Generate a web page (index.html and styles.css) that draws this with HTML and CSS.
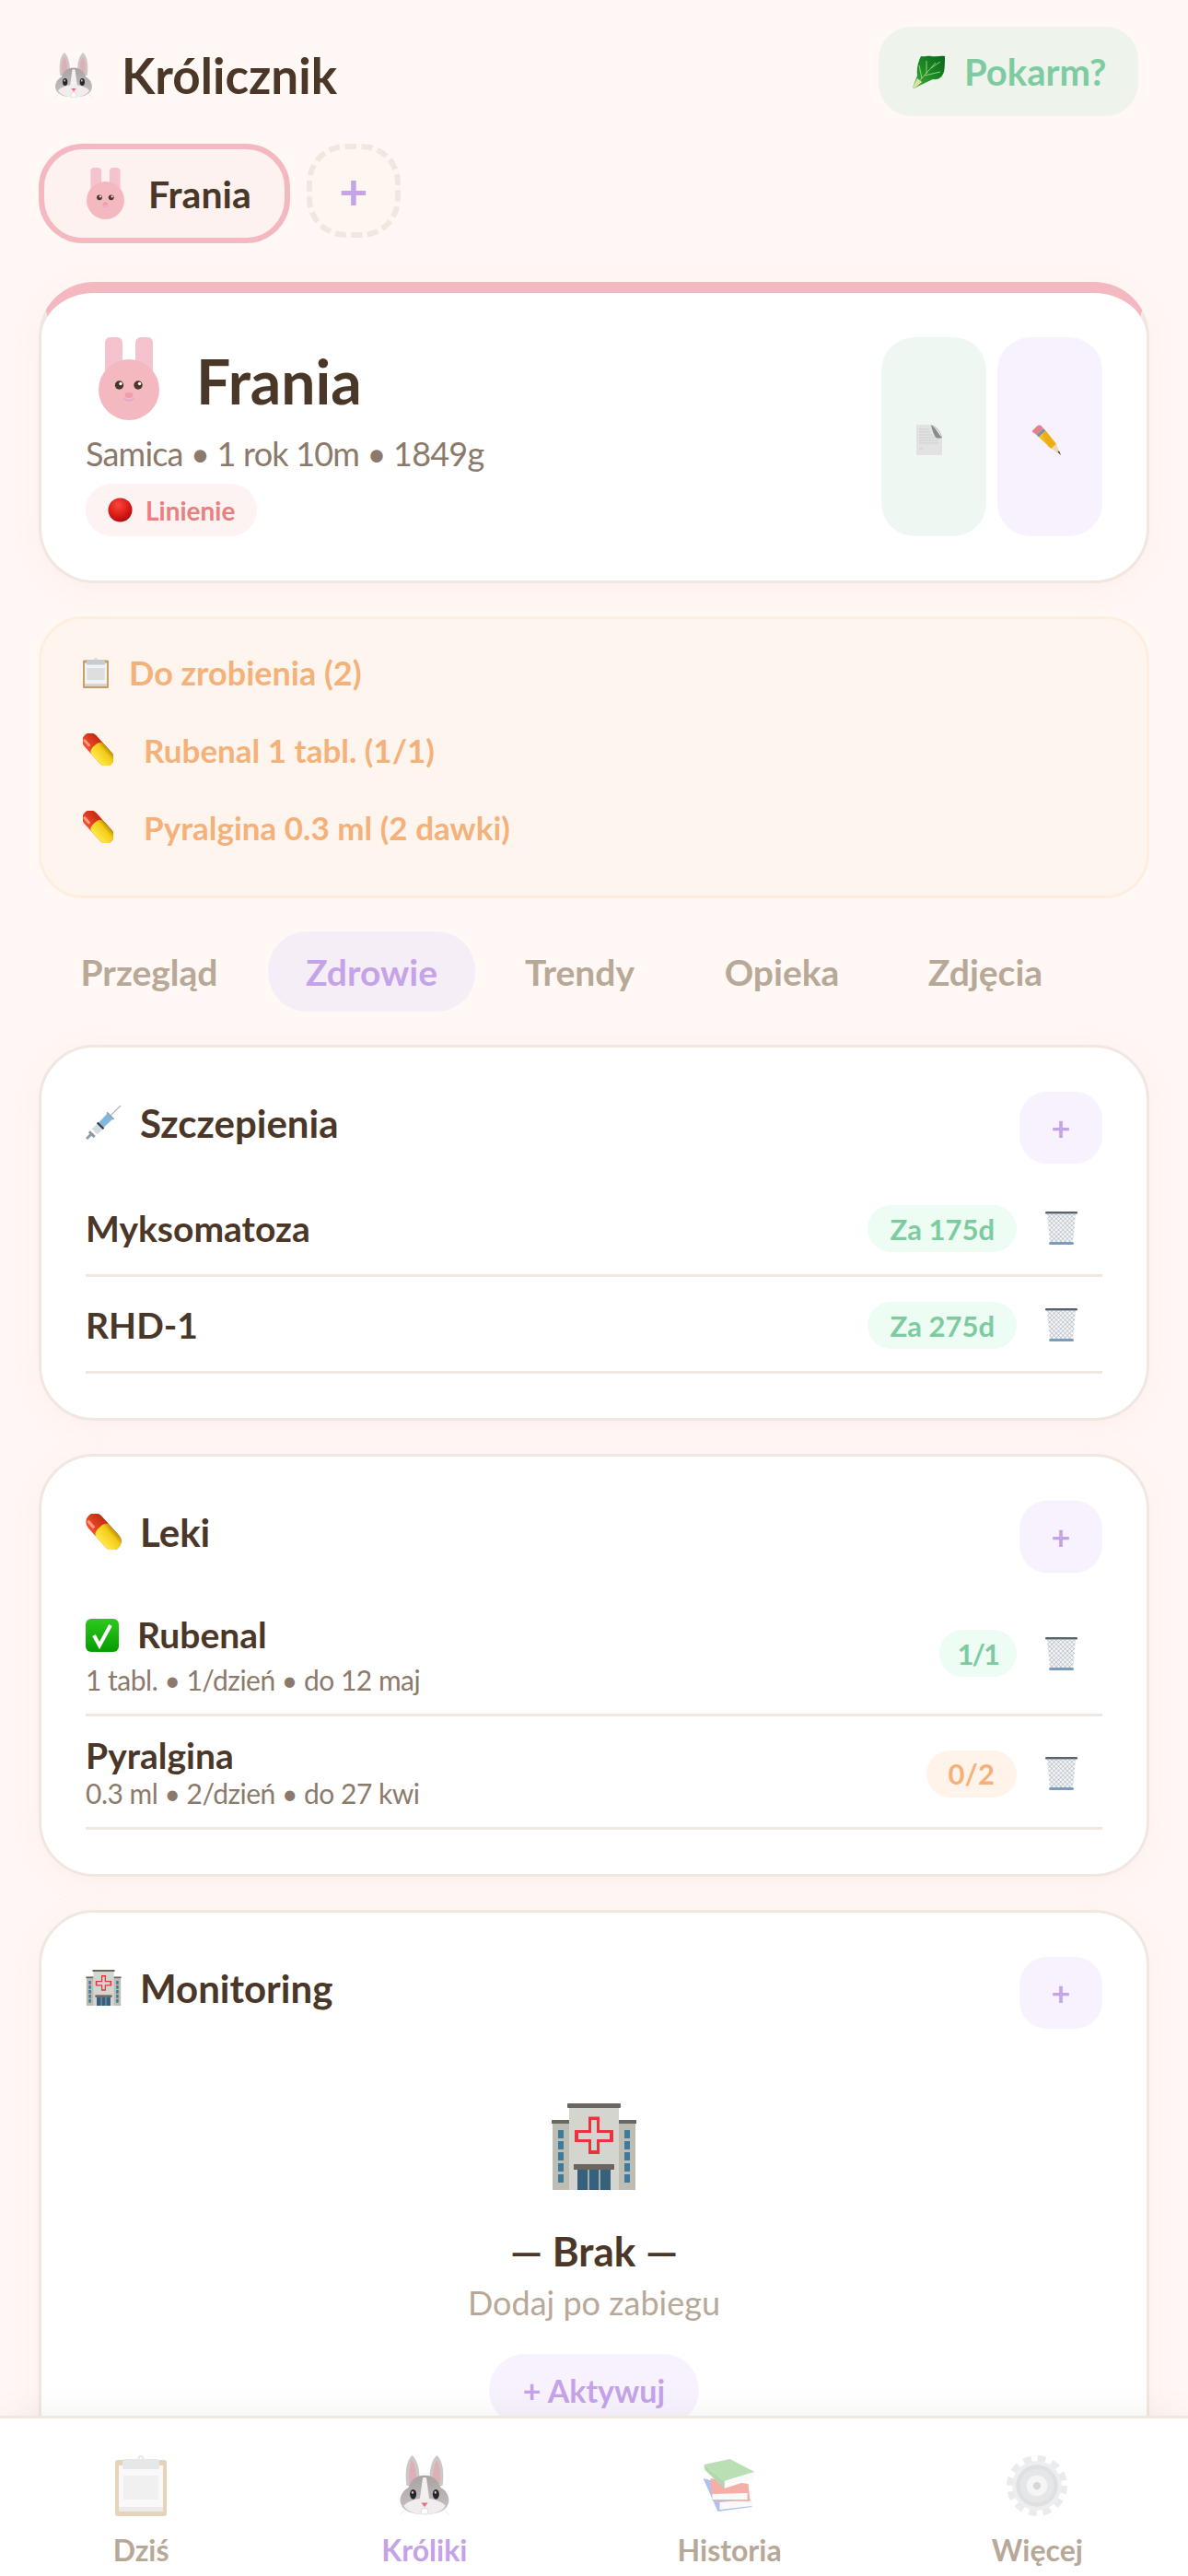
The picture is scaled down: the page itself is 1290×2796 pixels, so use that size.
FILE: index.html
```html
<!DOCTYPE html>
<html lang="pl">
<head>
    <meta charset="UTF-8">
    <title>Królicznik</title>
    <link rel="stylesheet" href="styles.css">
</head>
<body>
    <svg class="sprite" aria-hidden="true">
        <defs>
            <linearGradient id="headGrad" x1="0" y1="0" x2="0" y2="1">
                <stop offset="0" stop-color="#a9a2a2"/><stop offset="1" stop-color="#c9c3c3"/>
            </linearGradient>
            <radialGradient id="redBall" cx=".42" cy=".3" r=".75">
                <stop offset="0" stop-color="#f8483a"/><stop offset=".6" stop-color="#d91a17"/><stop offset="1" stop-color="#a90a0a"/>
            </radialGradient>
            <linearGradient id="leafGrad" x1="0" y1="1" x2="1" y2="0">
                <stop offset="0" stop-color="#4fae3c"/><stop offset=".5" stop-color="#1a8a26"/><stop offset="1" stop-color="#0b6518"/>
            </linearGradient>
            <linearGradient id="pillRed" x1="0" y1="0" x2="1" y2="0">
                <stop offset="0" stop-color="#f4502c"/><stop offset="1" stop-color="#c62a12"/>
            </linearGradient>
            <linearGradient id="pillYellow" x1="0" y1="0" x2="1" y2="0">
                <stop offset="0" stop-color="#ffe94a"/><stop offset=".7" stop-color="#f4cb16"/><stop offset="1" stop-color="#b98f0a"/>
            </linearGradient>
            <linearGradient id="checkGrad" x1="0" y1="0" x2="0" y2="1">
                <stop offset="0" stop-color="#2fc81d"/><stop offset="1" stop-color="#069c02"/>
            </linearGradient>
            <pattern id="mesh" width="3.4" height="3.4" patternUnits="userSpaceOnUse" patternTransform="rotate(45)">
                <path d="M0 0H3.4M0 0V3.4" stroke="#76828e" stroke-width=".6" fill="none"/>
            </pattern>
        </defs>

        <symbol id="rabbit" viewBox="0 0 54 64">
            <path d="M14 0C8 5 6 18 8 32H21C23 18 20 5 14 0Z" fill="#cdc7c6"/>
            <path d="M14 5C11 9 10 20 11 30H18C19 20 17 9 14 5Z" fill="#dcb0b6"/>
            <path d="M40 0C34 5 31 18 33 32H46C48 18 46 5 40 0Z" fill="#cdc7c6"/>
            <path d="M40 5C37 9 35 20 36 30H43C44 20 43 9 40 5Z" fill="#dcb0b6"/>
            <path d="M27 21C36 21 42 27 44 34C51 38 54 45 52 51C49 60 38 62 27 62C16 62 5 60 2 51C0 45 3 38 10 34C12 27 18 21 27 21Z" fill="url(#headGrad)"/>
            <path d="M25 24C25.5 23 28.5 23 29 24L32 46H22Z" fill="#f3f0f0"/>
            <path d="M5 53C11 47 21 45 27 45C33 45 43 47 49 53C45 60 36 62 27 62C18 62 9 60 5 53Z" fill="#f1eded"/>
            <ellipse cx="15" cy="41" rx="3.4" ry="5.2" fill="#26252a"/>
            <ellipse cx="39" cy="41" rx="3.4" ry="5.2" fill="#26252a"/>
            <ellipse cx="14.4" cy="39" rx="1" ry="1.5" fill="#cfcfcf"/>
            <ellipse cx="38.4" cy="39" rx="1" ry="1.5" fill="#cfcfcf"/>
            <path d="M23.5 50H30.5L27 54.5Z" fill="#e0728a"/>
            <rect x="23.5" y="56" width="7" height="6" rx="1.5" fill="#fff" stroke="#cfcaca" stroke-width=".6"/>
            <path d="M6 58L1 62M48 58L53 62" stroke="#ddd" stroke-width=".6"/>
        </symbol>

        <symbol id="bunny" viewBox="0 0 66 90">
            <path d="M7 40V6C7 2 10 0 13 0H20C24 0 26 3 26 7V40Z" fill="#f5c3cd"/>
            <path d="M40 40V7C40 3 42 0 46 0H53C56 0 59 2 59 6V40Z" fill="#f5c3cd"/>
            <circle cx="33" cy="57" r="33" fill="#f4b8c1"/>
            <circle cx="22.5" cy="52" r="4.7" fill="#4a3728"/>
            <circle cx="43" cy="52" r="4.7" fill="#4a3728"/>
            <circle cx="24" cy="50.5" r="1.7" fill="#fff"/>
            <circle cx="44.5" cy="50.5" r="1.7" fill="#fff"/>
            <ellipse cx="33" cy="63" rx="4.5" ry="3" fill="#f29cac"/>
            <path d="M28 66.5C30 69.5 36 69.5 38 66.5" stroke="#d9a3d6" stroke-width="1.3" fill="none" stroke-linecap="round"/>
        </symbol>

        <symbol id="lettuce" viewBox="0 0 36 36">
            <path d="M1 35L6 22C5 14 7 7 10 1C14 2 18 0 21 1C26 2 31 0 36 1C36 7 36 13 35 18C33 24 29 27 23 26C17 29 9 32 3 36Z" fill="url(#leafGrad)"/>
            <path d="M2 35L26 8M11 25L8 11M16 20L16 6M21 14L31 7M14 22L31 18" stroke="#b9e08e" stroke-width=".8" fill="none"/>
            <path d="M1 35L6 25L11 29L3 36Z" fill="#d6e3a4"/>
        </symbol>

        <symbol id="redcircle" viewBox="0 0 28 28">
            <circle cx="14" cy="14" r="13.5" fill="url(#redBall)"/>
        </symbol>

        <symbol id="page" viewBox="0 0 28 33">
            <path d="M0 0H16L28 14V33H0Z" fill="#e2e2e2"/>
            <path d="M3 5H14M3 8H15M3 11H17M3 14H20M3 17H24M3 20H24M3 26H8" stroke="#cfcfcf" stroke-width="1"/>
            <path d="M16 0C17 6 19 10 21 14C24 15 26 15 28 14C27 8 22 2 16 0Z" fill="#8c8c8c"/>
            <path d="M16 0C22 3 26 8 28 14C24 10 22 4 16 0Z" fill="#efefef"/>
        </symbol>

        <symbol id="pencil" viewBox="0 0 32 33">
            <path d="M1.5 6L6 1.5C7.5 0 10 0 11 1.5L13 4L5.5 11L2 8.5C.5 8 .5 7 1.5 6Z" fill="#e8808a"/>
            <path d="M13 4L5.5 11L8 13.5L15.5 6.5Z" fill="#7d8fa3"/>
            <path d="M15.5 6.5L8 13.5L21.5 26L27 21Z" fill="#f6bb1a"/>
            <path d="M12 10L18 23.5L21.5 26L27 21L15.5 6.5Z" fill="#e39d10" opacity=".45"/>
            <path d="M21.5 26L27 21L32 33Z" fill="#ead7b5"/>
            <path d="M28.5 29.5L30 28.5L32 33Z" fill="#2f2f33"/>
        </symbol>

        <symbol id="clipboard" viewBox="0 0 56 66">
            <rect x="0" y="5" width="56" height="61" rx="3" fill="#c89f68"/>
            <rect x="4" y="11" width="48" height="50" fill="#f2f2f2"/>
            <rect x="4" y="56" width="48" height="5" fill="#d9d5cf"/>
            <rect x="9" y="22" width="38" height="26" fill="#dedede"/>
            <rect x="8" y="4" width="40" height="11" rx="2" fill="#c6cbd0"/>
            <circle cx="28" cy="3.5" r="2.5" fill="none" stroke="#c6cbd0" stroke-width="2"/>
        </symbol>

        <symbol id="pill" viewBox="0 0 34 36">
            <g transform="rotate(-42 17 18)">
                <rect x="8" y="-4" width="18" height="44" rx="9" fill="url(#pillRed)"/>
                <path d="M8 18C8 13 12 12 17 12C22 12 26 13 26 18V31C26 36 22 40 17 40C12 40 8 36 8 31Z" fill="url(#pillYellow)"/>
                <rect x="11" y="-1" width="3" height="10" rx="1.5" fill="#ff9c80"/>
            </g>
        </symbol>

        <symbol id="syringe" viewBox="0 0 40 40">
            <path d="M27 13L39 1" stroke="#aab4bc" stroke-width="1.2"/>
            <path d="M4 30L10 36M1 38L7 32" stroke="#8f99a2" stroke-width="3"/>
            <path d="M7 27L13 33L31 15L25 9Z" fill="#d3dce2"/>
            <path d="M14 21L19 26L31 15L25 9Z" fill="#7fb8dd"/>
            <path d="M13 20L20 27" stroke="#34383c" stroke-width="2.2"/>
            <path d="M23.5 8.5L31.5 16.5" stroke="#98a3ab" stroke-width="1.8"/>
        </symbol>

        <symbol id="check" viewBox="0 0 36 36">
            <rect width="36" height="36" rx="6" fill="url(#checkGrad)"/>
            <path d="M9 18L15 29L27 7" stroke="#fff" stroke-width="4" fill="none"/>
        </symbol>

        <symbol id="trash" viewBox="0 0 35 36">
            <path d="M2 3H33L30 34H5Z" fill="#f3f5f7"/>
            <path d="M2 3H33L30 34H5Z" fill="url(#mesh)"/>
            <rect x="0" y="0" width="35" height="2.5" rx="1.2" fill="#59636d"/>
            <rect x="4" y="33" width="27" height="3" rx="1.5" fill="#7c9cbc"/>
        </symbol>

        <symbol id="hospital" viewBox="0 0 92 94">
            <rect x="1" y="19" width="20" height="75" fill="#bdbdb4"/>
            <rect x="71" y="19" width="20" height="75" fill="#bdbdb4"/>
            <rect x="0" y="18" width="20" height="4" fill="#6b665f"/>
            <rect x="72" y="18" width="20" height="4" fill="#6b665f"/>
            <rect x="19" y="3" width="54" height="91" fill="#d5d5cf"/>
            <rect x="17" y="0" width="58" height="5" rx="1" fill="#6b665f"/>
            <path d="M40 14.5H52V29H67V42H52V55H40V42H25V29H40Z" fill="#e8343f"/>
            <path d="M43 18H49V32H63V39H49V51H43V39H29V32H43Z" fill="#d5d5cf"/>
            <g fill="#3f7a99">
                <rect x="7" y="29" width="6" height="9"/><rect x="7" y="41" width="6" height="9"/><rect x="7" y="53" width="6" height="9"/><rect x="7" y="65" width="6" height="9"/><rect x="7" y="77" width="6" height="9"/>
                <rect x="79" y="29" width="6" height="9"/><rect x="79" y="41" width="6" height="9"/><rect x="79" y="53" width="6" height="9"/><rect x="79" y="65" width="6" height="9"/><rect x="79" y="77" width="6" height="9"/>
            </g>
            <rect x="24" y="66" width="44" height="6" fill="#6b665f"/>
            <rect x="28" y="72" width="36" height="22" fill="#36607c"/>
            <path d="M40 72V94M52 72V94" stroke="#c8c8c0" stroke-width="1.5"/>
        </symbol>

        <symbol id="books" viewBox="-4 -3 65 66">
            <path d="M0 22L16 58L53 53L52 45L30 30Z" fill="#5379d1"/>
            <path d="M18 48L52 45L53 52L18 56Z" fill="#f6f6f6"/>
            <path d="M8 22L49 28L51 47L10 46Z" fill="#e74f3b"/>
            <path d="M10 39L48 38V45L10 45Z" fill="#f6f6f6"/>
            <path d="M1 7L29 1L56 15L23 25Z" fill="#6bb95d"/>
            <path d="M23 25L56 15L54 23L23 33Z" fill="#f6f6f6"/>
            <path d="M1 7L23 25V33L2 13Z" fill="#5aa84d"/>
        </symbol>

        <symbol id="gear" viewBox="0 0 64 64">
            <circle cx="32" cy="32" r="26" fill="none" stroke="#d0d3d9" stroke-width="12" stroke-dasharray="7.5 6.11"/>
            <circle cx="32" cy="32" r="26" fill="#d8dade"/>
            <circle cx="32" cy="32" r="22" fill="#b9bbc1"/>
            <circle cx="32" cy="32" r="18" fill="#c6c8cd"/>
            <circle cx="32" cy="32" r="11" fill="#eaeaec"/>
            <circle cx="32" cy="32" r="4" fill="#a5a7ad"/>
        </symbol>
    </svg>

    <div class="app">
        <main class="content">
            <header class="topbar">
                <div class="brand">
                    <svg class="ico ico-brand"><use href="#rabbit"/></svg>
                    <h1>Królicznik</h1>
                </div>
                <button class="food-btn"><svg class="ico ico-leaf"><use href="#lettuce"/></svg>Pokarm?</button>
            </header>

            <div class="pets">
                <div class="pet-chip"><svg class="ico ico-chip"><use href="#bunny"/></svg>Frania</div>
                <div class="pet-add">+</div>
            </div>

            <section class="card profile">
                <div class="profile-info">
                    <div class="profile-name">
                        <svg class="ico ico-bunny"><use href="#bunny"/></svg>
                        <h2>Frania</h2>
                    </div>
                    <p class="meta">Samica • 1 rok 10m • 1849g</p>
                    <span class="tag"><svg class="ico ico-dot"><use href="#redcircle"/></svg>Linienie</span>
                </div>
                <div class="profile-actions">
                    <button class="act act-green"><svg class="ico ico-act"><use href="#page"/></svg></button>
                    <button class="act act-lilac"><svg class="ico ico-act-p"><use href="#pencil"/></svg></button>
                </div>
            </section>

            <section class="todo">
                <div class="todo-title"><svg class="ico ico-todo"><use href="#clipboard"/></svg>Do zrobienia (2)</div>
                <div class="todo-row"><svg class="ico ico-pill"><use href="#pill"/></svg>Rubenal 1 tabl. (1/1)</div>
                <div class="todo-row"><svg class="ico ico-pill"><use href="#pill"/></svg>Pyralgina 0.3 ml (2 dawki)</div>
            </section>

            <nav class="tabs">
                <span class="tab">Przegląd</span>
                <span class="tab active">Zdrowie</span>
                <span class="tab">Trendy</span>
                <span class="tab">Opieka</span>
                <span class="tab">Zdjęcia</span>
            </nav>

            <section class="card block">
                <div class="block-head">
                    <h3><svg class="ico ico-head"><use href="#syringe"/></svg>Szczepienia</h3>
                    <button class="add-btn">+</button>
                </div>
                <div class="row">
                    <div class="row-name">Myksomatoza</div>
                    <span class="badge">Za 175d</span>
                    <svg class="ico ico-trash"><use href="#trash"/></svg>
                </div>
                <div class="row">
                    <div class="row-name">RHD-1</div>
                    <span class="badge">Za 275d</span>
                    <svg class="ico ico-trash"><use href="#trash"/></svg>
                </div>
            </section>

            <section class="card block">
                <div class="block-head">
                    <h3><svg class="ico ico-head"><use href="#pill"/></svg>Leki</h3>
                    <button class="add-btn">+</button>
                </div>
                <div class="row row-med">
                    <div class="row-text">
                        <div class="row-name tall"><svg class="ico ico-check"><use href="#check"/></svg>Rubenal</div>
                        <div class="row-sub">1 tabl. • 1/dzień • do 12 maj</div>
                    </div>
                    <span class="badge badge-count">1/1</span>
                    <svg class="ico ico-trash"><use href="#trash"/></svg>
                </div>
                <div class="row row-med">
                    <div class="row-text">
                        <div class="row-name">Pyralgina</div>
                        <div class="row-sub">0.3 ml • 2/dzień • do 27 kwi</div>
                    </div>
                    <span class="badge badge-orange">0/2</span>
                    <svg class="ico ico-trash"><use href="#trash"/></svg>
                </div>
            </section>

            <section class="card block">
                <div class="block-head">
                    <h3><svg class="ico ico-head"><use href="#hospital"/></svg>Monitoring</h3>
                    <button class="add-btn">+</button>
                </div>
                <div class="empty">
                    <svg class="ico ico-empty"><use href="#hospital"/></svg>
                    <div class="empty-title">— Brak —</div>
                    <div class="empty-sub">Dodaj po zabiegu</div>
                    <button class="empty-btn">+ Aktywuj</button>
                </div>
            </section>
        </main>

        <footer class="bottom-nav">
            <div class="nav-item"><svg class="ico ico-nav dim"><use href="#clipboard"/></svg>Dziś</div>
            <div class="nav-item active"><svg class="ico ico-nav"><use href="#rabbit"/></svg>Króliki</div>
            <div class="nav-item"><svg class="ico ico-nav dim"><use href="#books"/></svg>Historia</div>
            <div class="nav-item"><svg class="ico ico-nav dim"><use href="#gear"/></svg>Więcej</div>
        </footer>
    </div>
</body>
</html>
```

FILE: styles.css
```css
* { box-sizing: border-box; }
html, body { margin: 0; height: 100%; }
body { font-family: "Lato", "Noto Sans", sans-serif; color: #4a3728; background: #fff8f5; }
h1, h2, h3, p { margin: 0; }
button { font-family: inherit; border: none; cursor: pointer; padding: 0; }

.sprite { position: absolute; width: 0; height: 0; }
.ico { display: block; flex-shrink: 0; }

.app { height: 2796px; display: flex; flex-direction: column; overflow: hidden; }
.content { flex: 1; min-height: 0; overflow: hidden; padding: 29px 42px 0; }

.topbar { display: flex; justify-content: space-between; align-items: flex-start; height: 127px; }
.brand { display: flex; align-items: center; gap: 31px; padding: 27px 0 0 17px; }
.brand h1 { font-size: 53px; font-weight: 700; line-height: 52px; }
.ico-brand { width: 42px; height: 50px; }
.food-btn { display: flex; align-items: center; gap: 21px; width: 282px; height: 97px; margin-right: 12px; padding: 0 36px; border-radius: 36px; background: #eef3ec; color: #7ecba1; font-size: 40px; font-weight: 700; }
.ico-leaf { width: 36px; height: 36px; }

.pets { display: flex; gap: 18px; align-items: flex-start; height: 150px; }
.pet-chip { display: flex; align-items: center; gap: 26px; width: 273px; height: 108px; padding-left: 46px; border: 6px solid #f4b8c1; border-radius: 48px; background: #fdf2f0; font-size: 41px; font-weight: 700; }
.ico-chip { width: 41px; height: 56px; }
.pet-add { display: flex; align-items: center; justify-content: center; width: 102px; height: 102px; border: 6px dashed #f0e8e0; border-radius: 42px; background: #fdf6f1; color: #c4a3e8; font-size: 54px; font-weight: 700; }

.card { background: #fff; border: 3px solid #f0e8e0; border-radius: 60px; box-shadow: 0 6px 30px rgba(244, 184, 193, .16); }

.profile { display: flex; justify-content: space-between; height: 327px; padding: 48px; border-top: 12px solid #f4b8c1; }
.profile-name { display: flex; align-items: center; gap: 40px; margin-left: 14px; height: 90px; }
.profile-name h2 { font-size: 66px; font-weight: 700; padding-top: 4px; }
.ico-bunny { width: 66px; height: 90px; }
.meta { margin-top: 12px; font-size: 36px; letter-spacing: -.8px; line-height: 48px; color: #8b7a6b; }
.tag { display: inline-flex; align-items: center; gap: 14px; height: 57px; margin-top: 9px; padding: 0 24px; border-radius: 30px; background: #fdf3f3; color: #e88080; font-size: 28px; font-weight: 700; }
.ico-dot { width: 27px; height: 27px; }
.profile-actions { display: flex; gap: 12px; }
.act { display: flex; align-items: center; justify-content: center; width: 114px; height: 216px; padding-top: 6px; border-radius: 36px; }
.act-green { background: #eff7f2; }
.act-lilac { background: #f7f2fd; }
.ico-act { width: 28px; height: 33px; margin-right: 10px; }
.ico-act-p { width: 32px; height: 33px; margin-right: 8px; }

.todo { height: 306px; margin-top: 36px; padding: 40px 45px; border: 3px solid #fdeee0; border-radius: 48px; background: #fff5ef; color: #f4b27a; font-weight: 700; }
.todo-title { display: flex; align-items: center; gap: 22px; height: 36px; font-size: 36px; }
.ico-todo { width: 28px; height: 33px; }
.todo-row { display: flex; align-items: center; gap: 33px; height: 37px; margin-top: 47px; font-size: 35px; }
.ico-pill { width: 33px; height: 35px; }

.tabs { display: grid; grid-template-columns: 240px 225px 209px 212px 212px; gap: 9px; height: 87px; margin-top: 36px; }
.tab { display: flex; align-items: center; justify-content: center; border-radius: 42px; color: #b8a898; font-size: 39px; font-weight: 700; }
.tab.active { background: #f6eef6; color: #c4a3e8; }

.block { margin-top: 36px; padding: 48px; }
.block-head { display: flex; justify-content: space-between; align-items: center; height: 78px; margin-bottom: 18px; }
.block-head h3 { display: flex; align-items: center; gap: 20px; padding-bottom: 11px; font-size: 42px; font-weight: 700; }
.ico-head { width: 39px; height: 39px; }
.add-btn { width: 90px; height: 78px; border-radius: 30px; background: #f7f2fd; color: #c4a3e8; font-size: 36px; font-weight: 700; }

.row { display: flex; align-items: center; padding: 27px 0 24px; border-bottom: 3px solid #f0e8e0; }
.row-med { padding: 24px 0 14px; }
.row-name { flex: 1; font-size: 39px; font-weight: 700; line-height: 51px; }
.row-med .row-name { line-height: 36px; }
.row-med .row-name.tall { display: flex; align-items: center; gap: 20px; line-height: 51px; }
.row-text { flex: 1; }
.row-sub { font-size: 30px; letter-spacing: -.5px; line-height: 46px; color: #8b7a6b; }
.ico-check { width: 36px; height: 36px; }
.badge { display: flex; align-items: center; height: 51px; padding: 0 24px; border-radius: 26px; background: #edfdf3; color: #7ecba1; font-size: 31px; font-weight: 700; }
.badge-count { letter-spacing: -2px; padding: 0 20px; }
.badge-orange { background: #fff3ea; color: #f4b27a; }
.ico-trash { width: 35px; height: 36px; margin: 0 27px 2px 31px; }
.row-med .badge, .row-med .ico-trash { margin-bottom: 6px; }

.empty { display: flex; flex-direction: column; align-items: center; padding-top: 63px; }
.ico-empty { width: 92px; height: 94px; }
.empty-title { margin-top: 40px; font-size: 44px; font-weight: 700; line-height: 52px; }
.empty-sub { margin-top: 6px; font-size: 36px; line-height: 48px; color: #b8a898; }
.empty-btn { width: 228px; height: 78px; margin-top: 32px; border-radius: 42px; background: #f7f2fd; color: #c4a3e8; font-size: 34px; font-weight: 700; }

.bottom-nav { position: relative; display: flex; justify-content: space-around; height: 174px; padding: 40px 0 0 6px; border-top: 3px solid #f0e8e0; background: #fff; box-shadow: 0 -6px 30px rgba(74, 55, 40, .05); }
.nav-item { display: flex; flex-direction: column; align-items: center; min-width: 66px; color: #b8a898; font-size: 32px; font-weight: 700; line-height: 44px; gap: 15px; }
.nav-item.active { color: #c4a3e8; }
.ico-nav { width: 66px; height: 66px; }
.ico-nav.dim { opacity: .45; }
```
